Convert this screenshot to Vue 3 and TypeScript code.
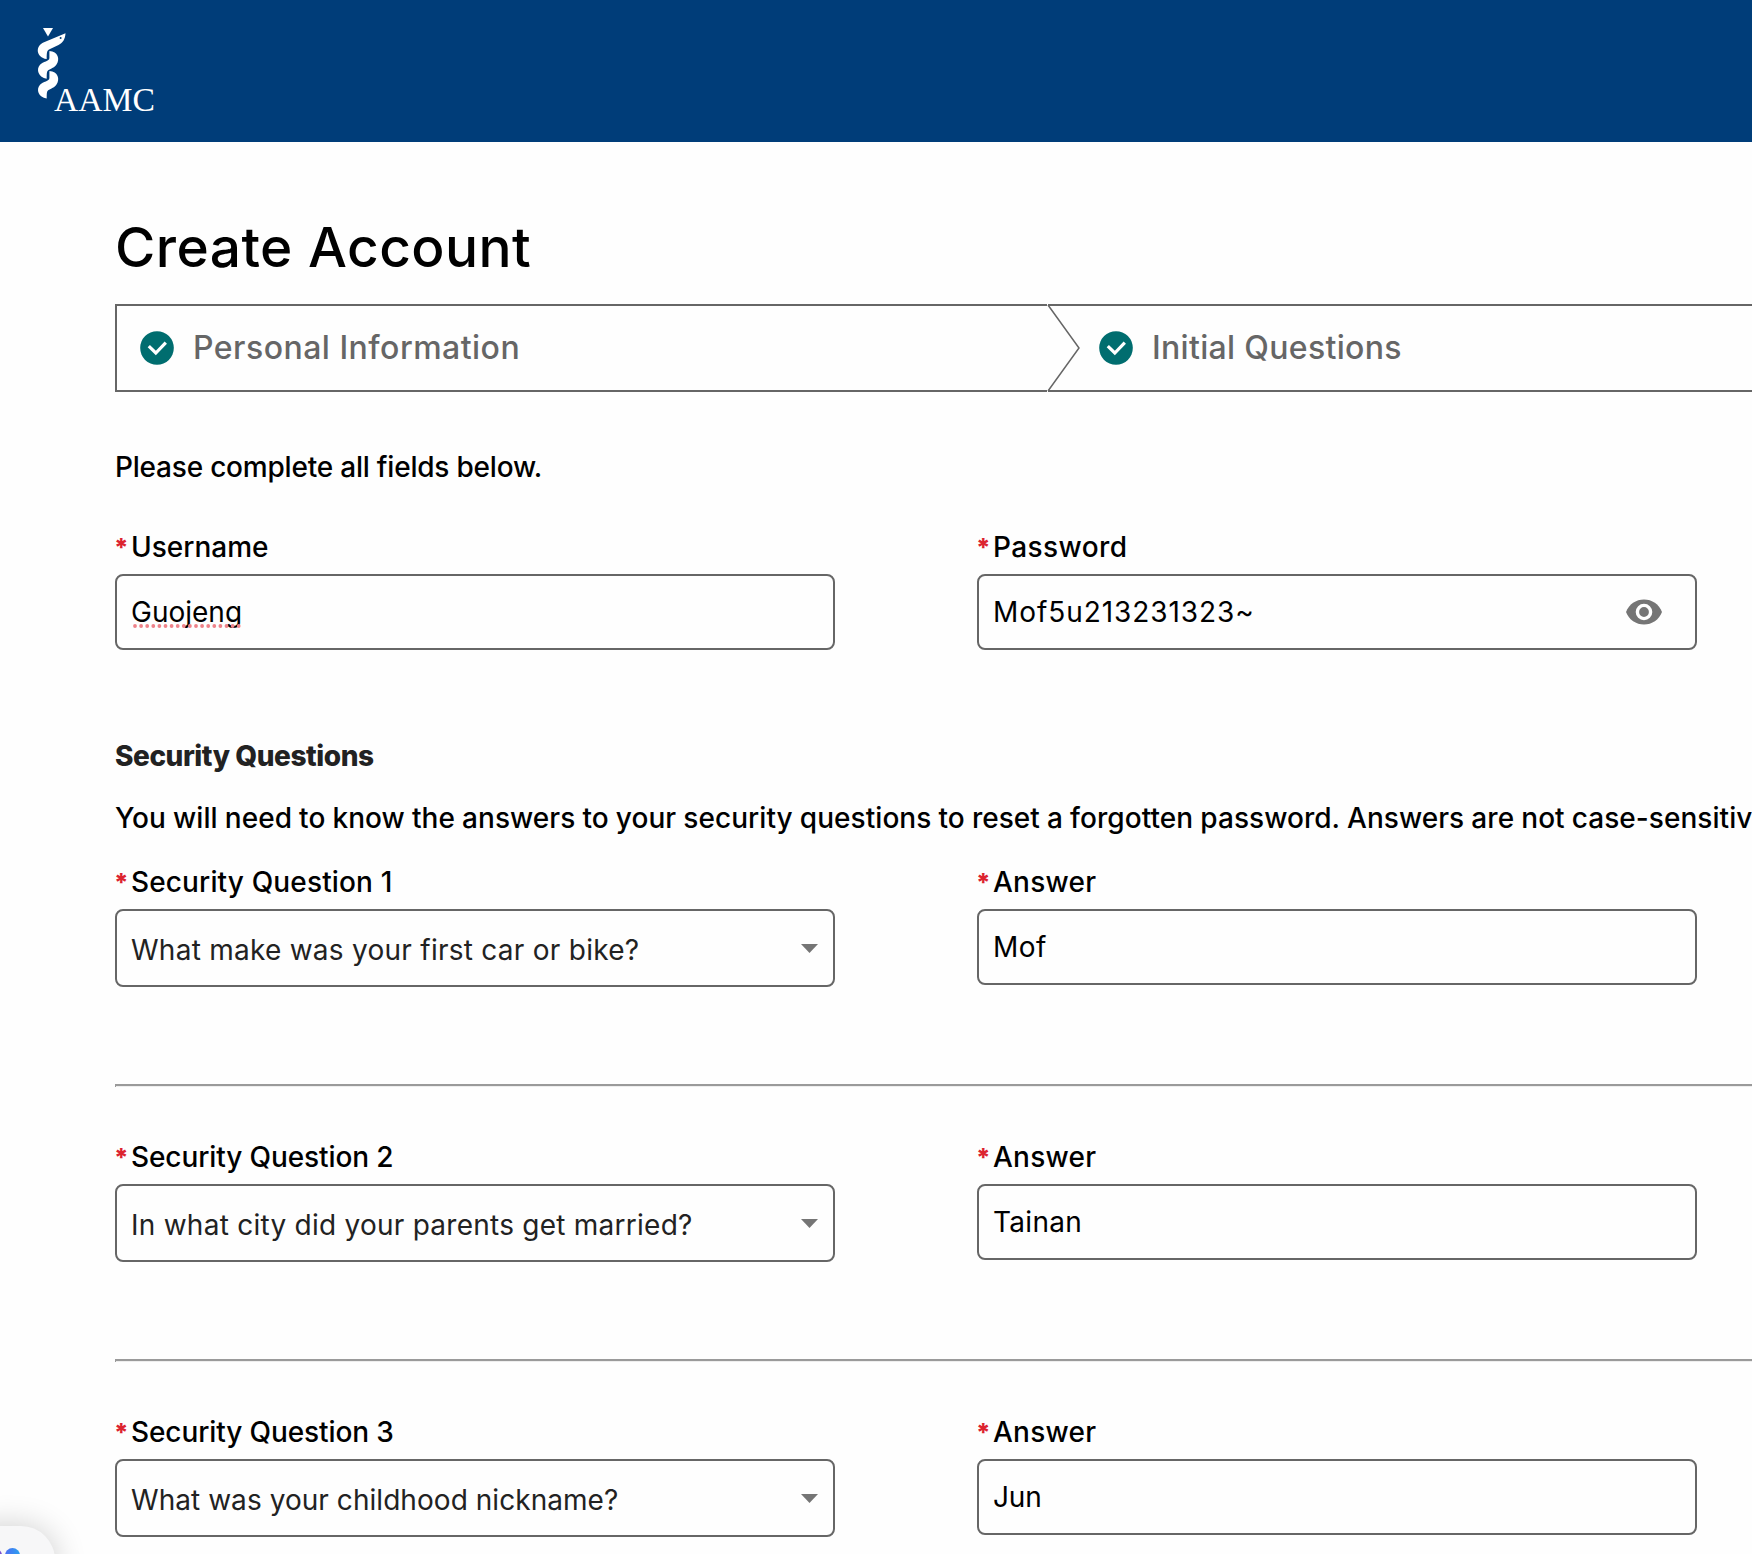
<script setup lang="ts">
interface Entry {
  text: string
  spacing: number
}

interface SecurityRow {
  id: number
  labelSpacing: number
  question: Entry
  answer: Entry
}

const steps: Entry[] = [
  { text: 'Personal Information', spacing: 0.48 },
  { text: 'Initial Questions', spacing: 0.32 },
]

const rows: SecurityRow[] = [
  { id: 1, labelSpacing: 0.14, question: { text: 'What make was your first car or bike?', spacing: 0.26 }, answer: { text: 'Mof', spacing: 0.5 } },
  { id: 2, labelSpacing: -0.1, question: { text: 'In what city did your parents get married?', spacing: 0.25 }, answer: { text: 'Tainan', spacing: 0.3 } },
  { id: 3, labelSpacing: -0.1, question: { text: 'What was your childhood nickname?', spacing: 0.05 }, answer: { text: 'Jun', spacing: -0.2 } },
]

const track = (value: number) => ({ letterSpacing: `${value}px` })
</script>

<template>
  <div class="page">
    <header class="header">
      <svg class="logo" width="170" height="142" viewBox="0 0 170 142" role="img" aria-label="AAMC">
        <g fill="#fff">
          <path d="M43 28h10l-5 8.4z" />
          <path d="M65.5 33.3C65.2 39 63 42.7 58.5 45L49 49.6C47.2 50.6 46.7 52 46.7 59C36 57.5 34.8 46 44 42.2z" />
          <path d="M49.4 51C58 51 60.2 59.5 56.5 64.5C54 68 50.5 68.6 48.2 70.3C46.8 71.5 46.7 73 46.7 78.7C38.5 77.5 35.7 69.5 40 64.8C43 61.4 49.4 61.6 49.4 58z" />
          <path d="M49.4 71C58 71 60.2 79.5 56.5 84.5C54 88 50.5 88.6 48.2 90.3C46.8 91.5 46.7 93 46.7 98.5C38.5 97.5 35.7 89.5 40 84.8C43 81.4 49.4 81.6 49.4 78z" />
        </g>
        <circle cx="60.6" cy="37.9" r="1" fill="#003d79" />
        <text x="54" y="111" textLength="101" lengthAdjust="spacingAndGlyphs" class="logo-text">AAMC</text>
      </svg>
    </header>

    <main class="main">
      <h1 class="title">Create Account</h1>

      <ol class="stepper">
        <li v-for="(step, index) in steps" :key="step.text" class="step" :class="{ first: index === 0 }">
          <svg class="check" width="34" height="34" viewBox="0 0 34 34">
            <circle cx="17" cy="17" r="16.8" fill="#006d6f" />
            <path d="M8.8 15.2l7 6.8L25.8 11.6" fill="none" stroke="#fff" stroke-width="3.2" />
          </svg>
          <span class="step-label" :style="track(step.spacing)">{{ step.text }}</span>
          <svg v-if="index === 0" class="chevron" width="34" height="88" viewBox="0 0 34 88">
            <path d="M1 1L32 44L1 87" fill="none" stroke="#666" stroke-width="1.5" />
          </svg>
        </li>
      </ol>

      <p class="intro">Please complete all fields below.</p>

      <div class="row">
        <div class="field">
          <div class="label"><i>*</i><span>Username</span></div>
          <div class="box"><span class="misspelled">Guojeng<svg class="dots" width="109" height="4"><line x1="2" y1="2" x2="108" y2="2" /></svg></span></div>
        </div>
        <div class="field">
          <div class="label"><i>*</i><span :style="track(0.4)">Password</span></div>
          <div class="box">
            <span :style="track(0.93)">Mof5u213231323~</span>
            <svg class="eye" width="36" height="26" viewBox="0 0 36 26">
              <path d="M0 13C3 5.2 10 .5 18 .5S33 5.2 36 13C33 20.8 26 25.5 18 25.5S3 20.8 0 13z" fill="#757575" />
              <circle cx="18" cy="13" r="6.6" fill="#757575" stroke="#fff" stroke-width="3.4" />
            </svg>
          </div>
        </div>
      </div>

      <h2 class="subtitle">Security Questions</h2>
      <p class="help">You will need to know the answers to your security questions to reset a forgotten password. Answers are not case-sensitive.</p>

      <section v-for="row in rows" :key="row.id" class="question">
        <div class="row">
          <div class="field">
            <div class="label"><i>*</i><span :style="track(row.labelSpacing)">Security Question {{ row.id }}</span></div>
            <div class="box select">
              <span :style="track(row.question.spacing)">{{ row.question.text }}</span>
              <svg class="arrow" width="17" height="9" viewBox="0 0 17 9"><path d="M0 0h17L8.5 9z" fill="#757575" /></svg>
            </div>
          </div>
          <div class="field">
            <div class="label"><i>*</i><span :style="track(0.25)">Answer</span></div>
            <div class="box"><span :style="track(row.answer.spacing)">{{ row.answer.text }}</span></div>
          </div>
        </div>
        <div v-if="row.id < rows.length" class="rule"></div>
      </section>
    </main>

    <div class="widget">
      <span class="dot purple"></span>
      <span class="dot blue"></span>
    </div>
  </div>
</template>

<style>
body {
  background: #fff;
}
</style>

<style scoped>
.page {
  position: relative;
  width: 100%;
  height: 1554px;
  overflow: hidden;
  background: #fefefe;
  color: #000;
  font: 500 28px/40px Inter, "Liberation Sans", sans-serif;
}
.header {
  height: 142px;
  background: #003d79;
}
.logo {
  display: block;
}
.logo-text {
  fill: #fff;
  font: 400 34.5px "Liberation Serif", serif;
}
.main {
  width: 1740px;
  padding: 73px 0 0 115px;
}
.title {
  margin: 0 0 25px;
  font-size: 55px;
  font-weight: 500;
  line-height: 64px;
  letter-spacing: 0.45px;
}
.stepper {
  display: flex;
  gap: 1px;
  height: 88px;
  margin: 0;
  padding: 0;
  list-style: none;
}
.step {
  position: relative;
  box-sizing: border-box;
  display: flex;
  flex: 1;
  align-items: center;
  gap: 19px;
  padding-left: 51px;
  border: solid #666;
  border-width: 2px 0;
}
.step.first {
  flex: 0 0 932px;
  padding-left: 23px;
  border-left-width: 2px;
}
.check {
  flex: none;
}
.step-label {
  padding-bottom: 1px;
  color: #666;
  font-size: 32px;
}
.chevron {
  position: absolute;
  top: -2px;
  right: -34px;
}
.intro {
  margin: 55px 0 44px;
  letter-spacing: -0.21px;
}
.row {
  display: flex;
  align-items: flex-start;
  gap: 142px;
}
.field {
  width: 720px;
}
.label {
  display: flex;
  margin-bottom: 11px;
  line-height: 32px;
}
.label i {
  width: 16px;
  color: #dc2430;
  font-size: 25px;
  font-style: normal;
  font-weight: 800;
  text-indent: -1px;
}
.box {
  box-sizing: border-box;
  display: flex;
  align-items: center;
  justify-content: space-between;
  height: 76px;
  padding: 0 13px 0 14px;
  border: 2px solid #666;
  border-radius: 8px;
  font-weight: 400;
}
.select {
  height: 78px;
  padding: 3px 15px 0 14px;
  color: #222;
}
.misspelled {
  position: relative;
}
.dots {
  position: absolute;
  bottom: 4px;
  left: 2px;
}
.dots line {
  stroke: #ee8289;
  stroke-width: 3.8;
  stroke-linecap: round;
  stroke-dasharray: 0 6.1;
}
.eye {
  margin-right: 20px;
}
.arrow {
  margin-bottom: 3px;
}
.subtitle {
  margin: 86px 0 22px;
  color: #222;
  font-size: 28px;
  font-weight: 800;
  letter-spacing: -0.45px;
}
.help {
  margin: 0 0 28px;
  white-space: nowrap;
  word-spacing: -0.4px;
  letter-spacing: 0.05px;
}
.question .label {
  margin-bottom: 11px;
}
.rule {
  box-sizing: border-box;
  height: 3px;
  margin: 97px 0 54px;
  border-top: 2px solid #9a9a9a;
  border-left: 1px solid #9a9a9a;
  background: #eee;
}
.widget {
  position: absolute;
  top: 1526px;
  left: -40px;
  width: 95px;
  height: 80px;
  border-radius: 34px;
  background: #f7f7f8;
  box-shadow: 0 0 32px rgba(0, 0, 0, 0.2);
}
.dot {
  position: absolute;
  top: 22px;
  width: 15px;
  height: 15px;
  border-radius: 50%;
}
.purple {
  left: 27px;
  background: #7a4fd0;
}
.blue {
  left: 45px;
  background: linear-gradient(90deg, #4f6df2, #2ba0f0);
}
</style>
